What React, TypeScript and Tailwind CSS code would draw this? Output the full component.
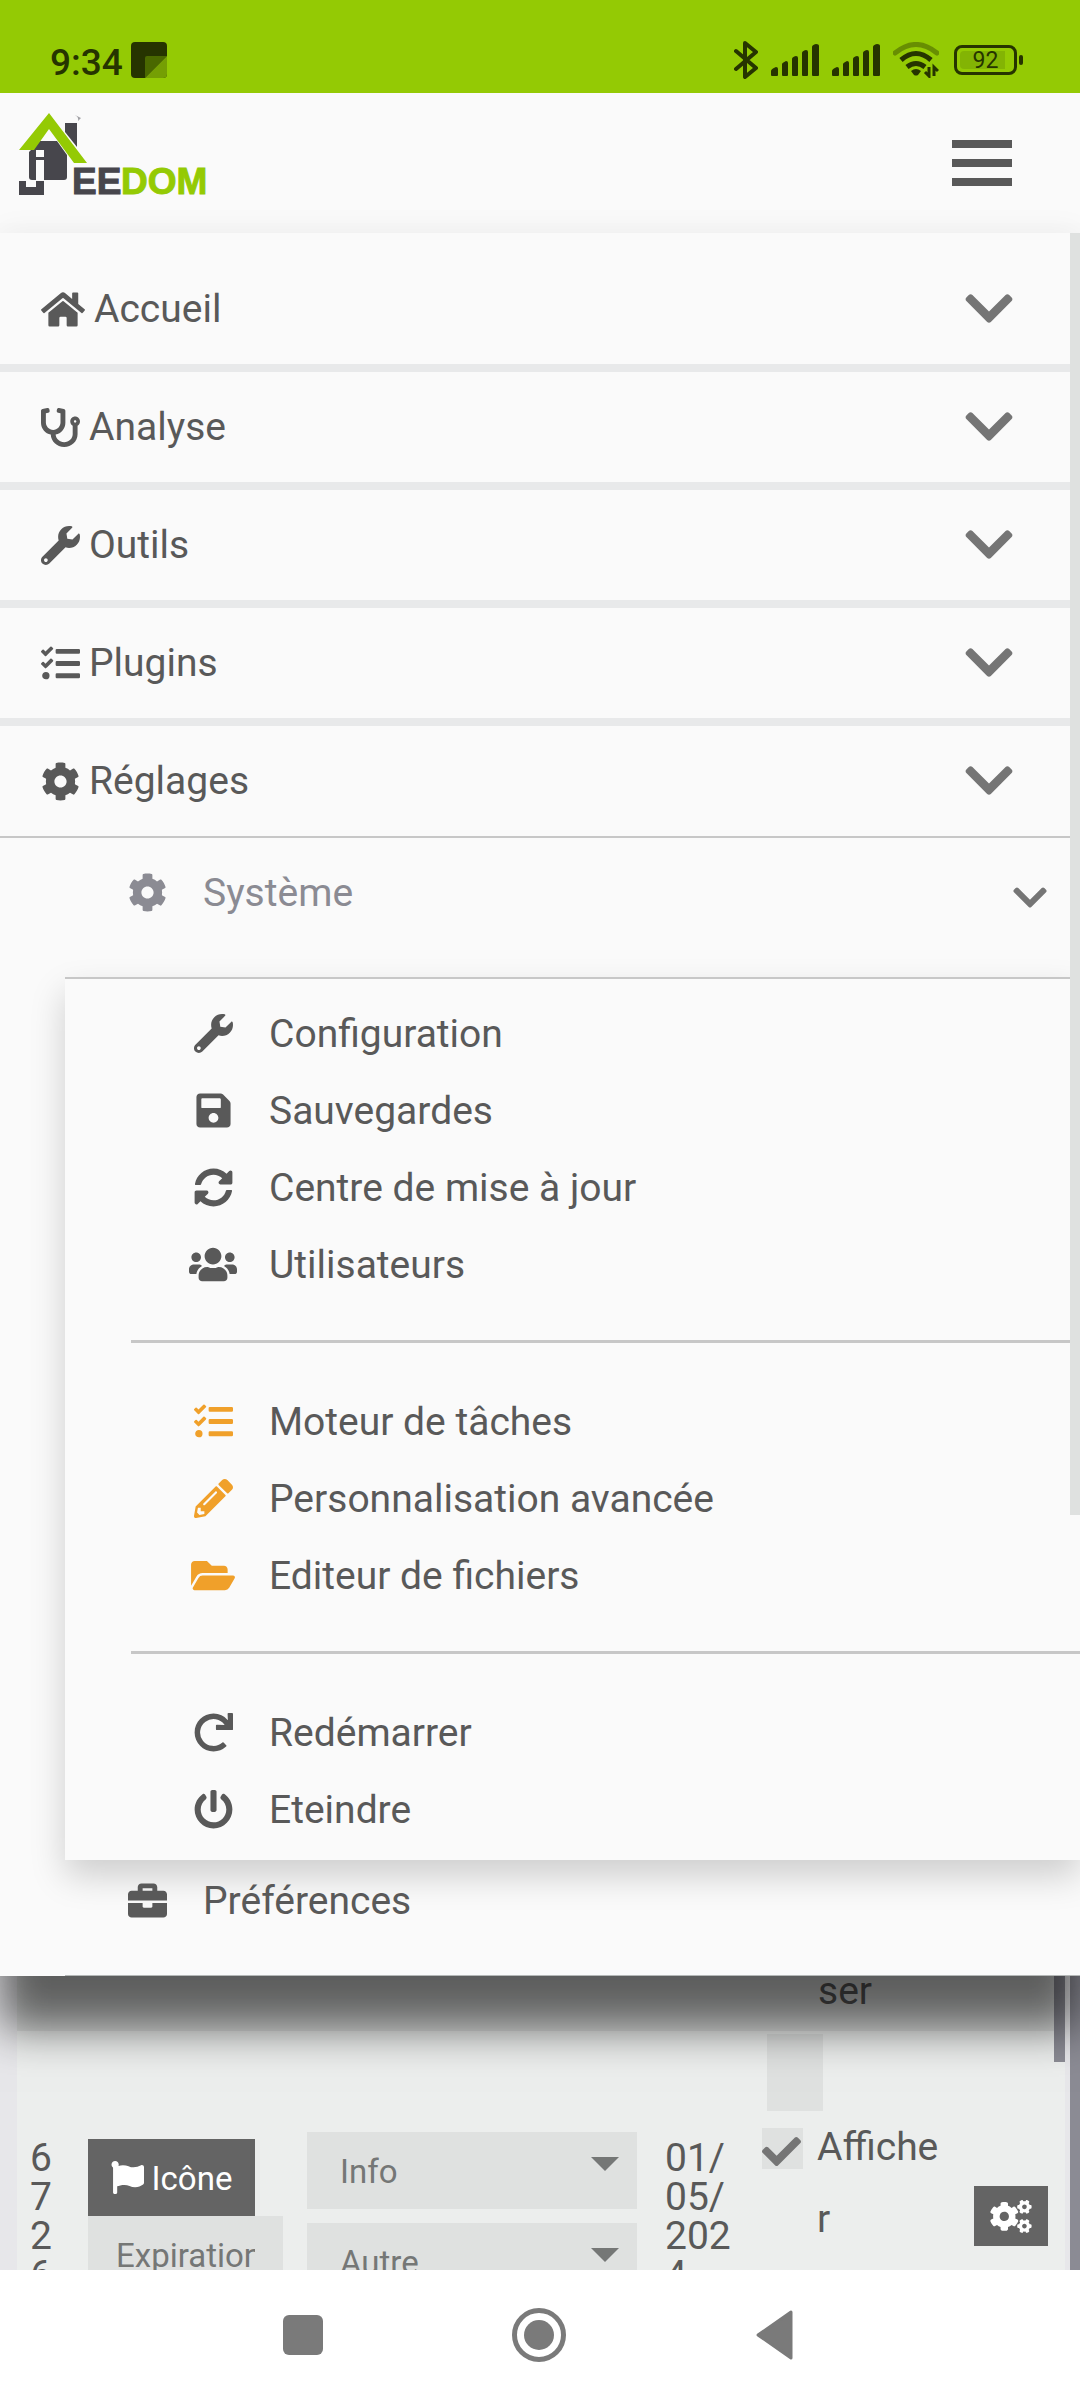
import React from 'react';
import type { IconType } from 'react-icons';
import {
  FaBriefcase,
  FaCheck,
  FaChevronDown,
  FaCog,
  FaCogs,
  FaFlag,
  FaFolderOpen,
  FaHome,
  FaPencilAlt,
  FaPowerOff,
  FaRedo,
  FaSave,
  FaStethoscope,
  FaSyncAlt,
  FaTasks,
  FaUsers,
  FaWrench,
} from 'react-icons/fa';

interface MenuEntry {
  label: string;
  icon: IconType;
  // the icons are not all square
  iconWidth?: string;
}

const mainMenu: MenuEntry[] = [
  { label: 'Accueil', icon: FaHome, iconWidth: 'w-11' },
  { label: 'Analyse', icon: FaStethoscope },
  { label: 'Outils', icon: FaWrench },
  { label: 'Plugins', icon: FaTasks },
  { label: 'Réglages', icon: FaCog },
];

const systemMenu: { highlighted: boolean; entries: MenuEntry[] }[] = [
  {
    highlighted: false,
    entries: [
      { label: 'Configuration', icon: FaWrench },
      { label: 'Sauvegardes', icon: FaSave },
      { label: 'Centre de mise à jour', icon: FaSyncAlt },
      { label: 'Utilisateurs', icon: FaUsers, iconWidth: 'w-12' },
    ],
  },
  {
    highlighted: true,
    entries: [
      { label: 'Moteur de tâches', icon: FaTasks },
      { label: 'Personnalisation avancée', icon: FaPencilAlt },
      { label: 'Editeur de fichiers', icon: FaFolderOpen, iconWidth: 'w-11' },
    ],
  },
  {
    highlighted: false,
    entries: [
      { label: 'Redémarrer', icon: FaRedo },
      { label: 'Eteindre', icon: FaPowerOff },
    ],
  },
];

function SignalIcon() {
  return (
    <svg width="48" height="32" viewBox="0 0 48 32" fill="currentColor">
      <path d="M0 31v-4q0-2 5-4q2 0 2 2v6q0 1-1 1H1q-1 0-1-1z" />
      <path d="M11 31V20q0-1 4-3q2 0 2 2v12q0 1-1 1h-4q-1 0-1-1z" />
      <path d="M21 31V15q0-2 4-3q2 0 2 2v17q0 1-1 1h-4q-1 0-1-1z" />
      <path d="M31 31V9q0-2 4-3q2 0 2 2v23q0 1-1 1h-4q-1 0-1-1z" />
      <path d="M41 31V3q0-2 4-3q3 0 3 2v29q0 1-1 1h-5q-1 0-1-1z" />
    </svg>
  );
}

function StatusBar() {
  return (
    <div className="flex h-[93px] shrink-0 items-center justify-between bg-[#94ca04] pt-[27px] pr-[57px] pl-[50px] text-[#263400]">
      <div className="flex items-center gap-2">
        <span className="pt-1 text-[37px] leading-[37px] font-medium">9:34</span>
        <svg width="36" height="36" viewBox="0 0 36 36">
          <rect width="36" height="36" rx="4" fill="#263400" />
          <path d="M14 36V16q0-2 2-2h20z" fill="#4a6800" />
          <path d="M36 14v18q0 4-4 4H14z" fill="#759f04" />
        </svg>
      </div>
      <div className="flex items-center gap-[13px]">
        <svg width="24" height="38" viewBox="0 0 24 38" fill="none" stroke="currentColor" strokeWidth="4" strokeLinecap="round" strokeLinejoin="round">
          <path d="M2 10l20 17-11 9V2l11 9L2 28" />
        </svg>
        <SignalIcon />
        <SignalIcon />
        <svg className="mr-0.5" width="46" height="36" viewBox="0 0 46 36" fill="none" stroke="currentColor" strokeLinecap="round">
          <path d="M2 11Q23-6 44 11" strokeWidth="5" opacity="0.4" />
          <path d="M8 18Q23 5 38 18" strokeWidth="5" strokeLinecap="butt" />
          <path d="M14 25q9-7 18 0" strokeWidth="5" strokeLinecap="butt" />
          <path d="M18 29q5-4 10 0l-3 4q-2 1-4 0z" fill="currentColor" stroke="none" />
          <path d="M36 25v9l-4-4M41 34v-9l4 4" strokeWidth="3" strokeLinecap="butt" />
        </svg>
        <div className="flex items-center gap-0.5">
          <div className="flex h-[30px] w-[63px] rounded-lg border-[3px] border-[#263400] p-[3px]">
            <span className="flex-1 rounded-sm bg-[linear-gradient(90deg,#83b404_88%,transparent_88%)] text-center text-[23px] leading-[20px]">92</span>
          </div>
          <div className="h-[10px] w-1 rounded-sm bg-[#263400]" />
        </div>
      </div>
    </div>
  );
}

function Logo() {
  return (
    <svg width="192" height="96" viewBox="0 0 192 96" role="img" aria-label="Jeedom">
      <path d="M46 11h12v24L46 20z" fill="#47464c" />
      <path d="M56 3q4 2 3 6l3-3z" fill="#a0a0a4" />
      <path d="M21 29h17l10 14v22q0 3-3 3H13q-3 0-3-3V40z" fill="#47464c" />
      <path d="M17 38h8v7h-8zM17 48h8v20h-8z" fill="#fafafa" />
      <path d="M0 69h7v6h10v-6h8v14H0z" fill="#47464c" />
      <path d="M30 1L0 38h15l15-21 25 34h13z" fill="#94ca04" />
      <g fontFamily="Liberation Sans, Arial, sans-serif" fontSize="37" fontWeight="700" strokeWidth="1">
        <text x="53" y="82" fill="#47464c" stroke="#47464c">EE</text>
        <text x="102" y="82" fill="#94ca04" stroke="#94ca04">DOM</text>
      </g>
    </svg>
  );
}

function Header() {
  return (
    <header className="flex h-[140px] shrink-0 items-start justify-between bg-[#fafafa] pr-[68px] pl-[19px]">
      <a href="#" className="pt-[19px]">
        <Logo />
      </a>
      <button type="button" aria-label="Menu" className="mt-[47px] flex w-[60px] flex-col gap-[11px]">
        <span className="h-2 w-full bg-[#595959]" />
        <span className="h-2 w-full bg-[#595959]" />
        <span className="h-2 w-full bg-[#595959]" />
      </button>
    </header>
  );
}

function SubEntry({ label, icon: Icon, iconWidth = 'w-[39px]', iconClass }: MenuEntry & { iconClass: string }) {
  return (
    <a href="#" className="flex h-[77px] items-center gap-8">
      <span className={`flex w-12 justify-center ${iconClass}`}>
        <Icon className={`h-[39px] shrink-0 ${iconWidth}`} />
      </span>
      <span className="pt-0.5">{label}</span>
    </a>
  );
}

function SystemPanel() {
  return (
    <div className="relative border-t-2 border-[#c7c7c7] bg-[#fafafa] pt-4 pb-3 shadow-[0_16px_33px_rgba(0,0,0,0.175)]">
      {systemMenu.map((group, index) => (
        <React.Fragment key={index}>
          {index > 0 && <hr className="mt-[37px] mb-10 ml-[66px] border-t-[3px] border-[#c7c7c7]" />}
          <ul className="pl-[124px]">
            {group.entries.map((entry) => (
              <li key={entry.label}>
                <SubEntry {...entry} iconClass={group.highlighted ? 'text-[#f0a02a]' : 'text-[#595959]'} />
              </li>
            ))}
          </ul>
        </React.Fragment>
      ))}
    </div>
  );
}

function Menu() {
  return (
    <nav className="relative z-10 shrink-0 bg-[#fafafa] shadow-[0_53px_42px_rgba(0,0,0,0.57),0_0_30px_rgba(0,0,0,0.06)]">
      <ul className="divide-y-8 divide-[#e8e9ea] pt-[21px]">
        {mainMenu.map(({ label, icon: Icon, iconWidth = 'w-[39px]' }) => (
          <li key={label}>
            <button type="button" className="flex h-[110px] w-full items-center gap-[9px] pr-[67px] pl-[41px]">
              <Icon className={`h-[39px] ${iconWidth}`} />
              {label}
              <FaChevronDown className="mb-0.5 ml-auto h-[55px] w-12 text-[#757575]" />
            </button>
          </li>
        ))}
      </ul>
      <div className="border-t-2 border-[#c7c7c7] pl-[65px]">
        <button type="button" className="mt-4 mb-[46px] flex h-[77px] w-full items-center gap-8 pr-[33px] pl-[58px] text-[#8b8b93]">
          <span className="flex w-12 justify-center">
            <FaCog className="h-[39px] w-[39px]" />
          </span>
          <span className="pt-0.5">Système</span>
          <FaChevronDown className="mt-2.5 ml-auto h-[39px] w-[34px] text-[#757575]" />
        </button>
        <SystemPanel />
        <div className="relative border-b border-[#b5b8b7] pt-0.5 pb-9 pl-[58px]">
          <SubEntry label="Préférences" icon={FaBriefcase} iconClass="text-[#595959]" />
        </div>
      </div>
      {/* scroll thumb */}
      <div className="absolute top-0 right-0 h-[1282px] w-[10px] bg-[#dfe1e0]" />
    </nav>
  );
}

function TypeSelect({ label, value }: { label: string; value: string }) {
  return (
    <div className="relative">
      <select
        aria-label={label}
        defaultValue={value}
        className="block h-[77px] w-full appearance-none bg-[#dfe1e0] pt-0.5 pl-[33px] text-[33px] text-[#757776]"
      >
        <option>{value}</option>
      </select>
      <svg className="pointer-events-none absolute top-[25px] right-[18px]" width="28" height="14" viewBox="0 0 28 14">
        <path d="M0 0h28L14 14z" fill="#757776" />
      </svg>
    </div>
  );
}

function CommandTable() {
  return (
    <section className="relative min-h-0 flex-1 overflow-hidden bg-[#e7e7ea] pr-[15px] pl-[17px]">
      <div className="h-full overflow-hidden bg-[linear-gradient(#dddfde_55px,#eceeed_55px)]">
        <table className="w-full table-fixed">
          <colgroup>
            <col className="w-[71px]" />
            <col className="w-[219px]" />
            <col />
            <col className="w-[97px]" />
            <col className="w-[212px]" />
            <col className="w-[91px]" />
          </colgroup>
          <tbody className="align-top">
            <tr>
              <td colSpan={4} />
              <td>
                <label htmlFor="previous-unit" className="block pl-14 leading-[30px]">
                  ser
                </label>
                <input id="previous-unit" type="text" className="mt-7 ml-[5px] block h-[77px] w-14 bg-[#dfe1e0]" />
              </td>
              <td />
            </tr>
            <tr>
              <td className="pt-7 pr-7 pl-[13px] leading-[39px] break-all">6726</td>
              <td className="pt-7">
                <button type="button" className="flex h-[77px] w-[167px] items-center justify-center gap-2 bg-[#646464] text-[33px] text-white">
                  <FaFlag className="h-[33px] w-[33px]" />
                  <span className="pt-0.5">Icône</span>
                </button>
                <input
                  type="text"
                  aria-label="Nom"
                  defaultValue="Expiration"
                  className="block h-[77px] w-[195px] bg-[#dfe1e0] px-7 pt-0.5 text-[33px] text-[#757776]"
                />
              </td>
              <td className="space-y-[14px] pt-[21px] pr-7">
                <TypeSelect label="Type" value="Info" />
                <TypeSelect label="Sous-type" value="Autre" />
              </td>
              <td className="pt-7 pr-[27px] leading-[39px] break-all">01/05/2024</td>
              <td>
                <label className="flex items-start gap-[14px]">
                  <span className="relative mt-[17px] flex size-[41px] shrink-0">
                    <input type="checkbox" defaultChecked className="size-full appearance-none bg-[#dfe1e0]" />
                    <FaCheck className="pointer-events-none absolute inset-y-1 left-0 h-[39px] w-[39px] text-[#757575]" />
                  </span>
                  <span className="w-[130px] leading-[72px] break-all">Afficher</span>
                </label>
              </td>
              <td className="pt-[75px]">
                <button type="button" aria-label="Configurer" className="flex h-[60px] w-[74px] items-center justify-center bg-[#646464] text-white">
                  <FaCogs className="h-[33px] w-[42px]" />
                </button>
              </td>
            </tr>
          </tbody>
        </table>
      </div>
      {/* scroll thumbs of the table and of the page */}
      <div className="absolute top-0 right-[15px] h-[86px] w-[11px] bg-[#8b8b94]" />
      <div className="absolute inset-y-0 right-0 w-[10px] bg-[#8b8b94]" />
    </section>
  );
}

function NavigationBar() {
  return (
    <footer className="flex h-[130px] shrink-0 items-center justify-center gap-[180px] bg-white pr-0.5 text-[#7a7a7a]">
      <button type="button" aria-label="Applications" className="flex size-14 items-center justify-center">
        <span className="size-10 rounded-md bg-[#7a7a7a]" />
      </button>
      <button type="button" aria-label="Accueil" className="flex size-14 items-center justify-center">
        <svg width="54" height="54" viewBox="0 0 54 54">
          <circle cx="27" cy="27" r="24.5" fill="none" stroke="currentColor" strokeWidth="5" />
          <circle cx="27" cy="27" r="15" fill="currentColor" />
        </svg>
      </button>
      <button type="button" aria-label="Retour" className="flex size-14 items-center justify-center">
        <svg width="38" height="54" viewBox="0 0 38 54">
          <path d="M2 27L35 4v46z" fill="currentColor" stroke="currentColor" strokeWidth="3" strokeLinejoin="round" />
        </svg>
      </button>
    </footer>
  );
}

export default function App() {
  return (
    <div className="flex h-screen flex-col overflow-hidden font-['Roboto',sans-serif] text-[39px] text-[#595959]">
      <StatusBar />
      <Header />
      <Menu />
      <CommandTable />
      <NavigationBar />
    </div>
  );
}
